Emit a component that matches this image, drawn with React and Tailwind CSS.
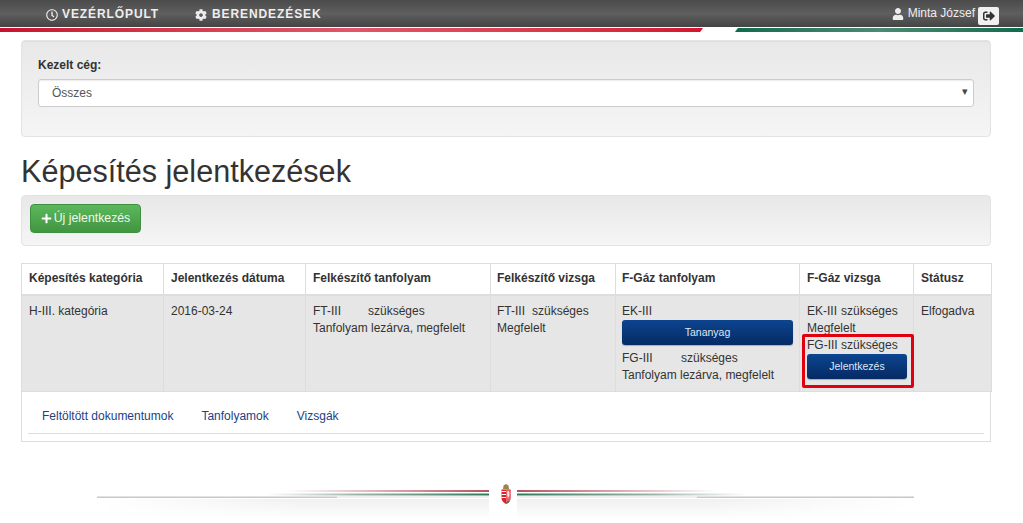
import { FaRegClock, FaCog, FaUser, FaSignOutAlt, FaPlus } from 'react-icons/fa'

const headers = [
  { label: 'Képesítés kategória', className: 'w-[142px] pl-[7px]' },
  { label: 'Jelentkezés dátuma', className: 'w-[142px] pl-[7px]' },
  { label: 'Felkészítő tanfolyam', className: 'w-[185px] pl-[7px]' },
  { label: 'Felkészítő vizsga', className: 'w-[125px] pl-[6px]' },
  { label: 'F-Gáz tanfolyam', className: 'w-[184px] pl-[6px]' },
  { label: 'F-Gáz vizsga', className: 'w-[114px] pl-[7px]' },
  { label: 'Státusz', className: 'w-[78px] pl-[7px]' },
]

function BlueButton({ children }) {
  return (
    <button className="block h-[25px] w-full rounded-[3px] bg-gradient-to-b from-[#0c4590] to-[#062a63] text-center text-[10.5px] text-[#dfe8f5] shadow-[0_1px_1px_rgba(0,0,0,0.25)]">
      {children}
    </button>
  )
}

// footer ornament: tricolour lines with a soft shadow and the coat of arms in the middle
function Ornament() {
  return (
    <svg width="817" height="43" viewBox="0 0 817 43" className="block">
      <defs>
        <linearGradient id="redL" x1="190" x2="392" y1="0" y2="0" gradientUnits="userSpaceOnUse">
          <stop offset="0" stopColor="#b5535d" stopOpacity="0" />
          <stop offset="1" stopColor="#b5535d" />
        </linearGradient>
        <linearGradient id="greenL" x1="170" x2="392" y1="0" y2="0" gradientUnits="userSpaceOnUse">
          <stop offset="0" stopColor="#9fb5ac" stopOpacity="0" />
          <stop offset="0.4" stopColor="#9fb5ac" />
          <stop offset="1" stopColor="#2f7a5c" />
        </linearGradient>
        <linearGradient id="redR" x1="420" x2="620" y1="0" y2="0" gradientUnits="userSpaceOnUse">
          <stop offset="0" stopColor="#b5535d" />
          <stop offset="1" stopColor="#b5535d" stopOpacity="0" />
        </linearGradient>
        <linearGradient id="greenR" x1="420" x2="650" y1="0" y2="0" gradientUnits="userSpaceOnUse">
          <stop offset="0" stopColor="#2f7a5c" />
          <stop offset="0.6" stopColor="#9fb5ac" />
          <stop offset="1" stopColor="#9fb5ac" stopOpacity="0" />
        </linearGradient>
        <linearGradient id="shadow" x1="0" x2="0" y1="0" y2="1">
          <stop offset="0" stopColor="#f0f0f0" />
          <stop offset="1" stopColor="#ffffff" />
        </linearGradient>
        <linearGradient id="edge" x1="0" x2="1" y1="0" y2="0">
          <stop offset="0" stopColor="#000" />
          <stop offset="0.25" stopColor="#fff" />
          <stop offset="0.75" stopColor="#fff" />
          <stop offset="1" stopColor="#000" />
        </linearGradient>
        <mask id="fade"><rect width="817" height="43" fill="url(#edge)" /></mask>
      </defs>
      <rect x="0" y="18" width="392" height="20" fill="url(#shadow)" mask="url(#fade)" />
      <rect x="420" y="18" width="397" height="20" fill="url(#shadow)" mask="url(#fade)" />
      <rect x="190" y="9" width="202" height="2" fill="url(#redL)" />
      <rect x="170" y="12.5" width="222" height="2" fill="url(#greenL)" />
      <rect x="0" y="15.5" width="240" height="1.5" fill="#c8c8c8" />
      <rect x="240" y="15.5" width="152" height="1" fill="#e2e2e2" />
      <rect x="420" y="9" width="200" height="2" fill="url(#redR)" />
      <rect x="420" y="12.5" width="230" height="2" fill="url(#greenR)" />
      <rect x="420" y="15.5" width="180" height="1" fill="#e2e2e2" />
      <rect x="600" y="15.5" width="217" height="1.5" fill="#c8c8c8" />
      <g transform="translate(404 3)">
        <path d="M2 5 L2.5 1.5 L5 0 L7.5 1.5 L8 5 Z" fill="#9a8646" />
        <path d="M0.5 5.5 H9.5 V14 C9.5 17 7 19 5 20 C3 19 0.5 17 0.5 14 Z" fill="#d8232f" />
        <path d="M5 5.5 H9.5 V14 C9.5 17 7 19 5 20 Z" fill="#e8636b" />
        <path d="M0.5 7.5 H5 M0.5 10.5 H5 M0.5 13.5 H5" stroke="#fff" strokeWidth="1.2" />
        <path d="M7.2 7 V13.5 M6 9 H8.5 M6 11 H8.5" stroke="#fff" strokeWidth="1" />
        <path d="M5.5 18 L9 16 L8 18.5 L5.5 20 Z" fill="#3f7a4e" />
      </g>
    </svg>
  )
}

export default function App() {
  return (
    <div className="min-h-[523px] overflow-hidden bg-white font-['Liberation_Sans',Arial,sans-serif] text-[12px] leading-[17px] text-[#333]">
      <nav>
        <div className="flex h-[27px] items-start justify-between bg-gradient-to-b from-[#4b4b4b] via-[#5f5f5f] to-[#444] text-white">
          <ul className="ml-[46px] flex gap-[36px] pt-[6px] text-[12px] font-bold leading-[17px] tracking-[0.9px] text-[#eee]">
            <li className="flex items-center gap-[4px]"><FaRegClock className="text-[12px]" />VEZÉRLŐPULT</li>
            <li className="flex items-center gap-[5px]"><FaCog className="text-[12px]" />BERENDEZÉSEK</li>
          </ul>
          <div className="mr-[24px] flex items-start gap-[3px] pt-[5px] text-[12px] text-[#eee]">
            <span className="flex h-[17px] items-center gap-[4px]"><FaUser className="text-[12px]" />Minta József</span>
            <span className="mt-[2px] flex h-[18px] w-[21px] items-center justify-center rounded-[2px] bg-[#f0f0f0] text-[#333]">
              <FaSignOutAlt className="text-[12px]" />
            </span>
          </div>
        </div>
        <div className="flex h-[5px] border-t border-white">
          <div className="w-[703px] bg-gradient-to-r from-[#c8102e] via-[#e0566a] to-[#d3152f] [clip-path:polygon(0_0,100%_0,99.6%_100%,0_100%)]" />
          <div className="w-[32px]" />
          <div className="flex-1 bg-gradient-to-r from-[#0d6b4d] via-[#4b8a74] to-[#0d6b4d] [clip-path:polygon(1%_0,100%_0,100%_100%,0_100%)]" />
        </div>
      </nav>

      <main className="mx-[21px] w-[970px]">
        <section className="mt-[8px] h-[97px] rounded-[4px] border border-[#e3e3e3] bg-gradient-to-b from-[#e8e8e8] to-[#f5f5f5] px-[16px] pt-[16px] shadow-[inset_0_1px_1px_rgba(0,0,0,0.05)]">
          <label className="block font-bold">Kezelt cég:</label>
          <div className="relative mt-[5px]">
            <select className="block h-[28px] w-full appearance-none rounded-[3px] border border-[#ccc] bg-white pl-[13px] text-[12px] text-[#555] shadow-[inset_0_1px_1px_rgba(0,0,0,0.075)]">
              <option>Összes</option>
            </select>
            <span className="absolute right-[6px] top-[4px] text-[11px] text-[#444]">▾</span>
          </div>
        </section>

        <h1 className="mt-[16px] text-[30.6px] font-normal leading-[36px] text-[#333]">Képesítés jelentkezések</h1>

        <section className="mt-[6px] h-[51px] rounded-[4px] border border-[#e3e3e3] bg-gradient-to-b from-[#e8e8e8] to-[#f5f5f5] pl-[8px] pt-[8px]">
          <button className="flex h-[29px] w-[111px] items-center justify-center gap-[2px] rounded-[4px] border border-[#3e8f3e] bg-gradient-to-b from-[#5cb85c] to-[#419641] text-[12.3px] text-[#eef7ee]">
            <FaPlus className="text-[11px] text-white" />Új jelentkezés
          </button>
        </section>

        <table className="mt-[17px] w-[970px] table-fixed border-collapse">
          <thead>
            <tr className="h-[31px]">
              {headers.map(({ label, className }) => (
                <th key={label} className={`${className} border border-[#ddd] border-b-2 pr-[6px] text-left font-bold`}>{label}</th>
              ))}
            </tr>
          </thead>
          <tbody>
            <tr className="h-[97px] bg-[#e6e6e6] align-top">
              <td className="border border-[#ddd] pl-[7px] pr-[6px] pt-[7px]">H-III. kategória</td>
              <td className="border border-[#ddd] pl-[7px] pr-[6px] pt-[7px]">2016-03-24</td>
              <td className="border border-[#ddd] pl-[7px] pr-[6px] pt-[7px]">
                <div className="flex"><span className="w-[55px]">FT-III</span>szükséges</div>
                <div>Tanfolyam lezárva, megfelelt</div>
              </td>
              <td className="border border-[#ddd] px-[6px] pt-[7px]">
                <div className="flex"><span className="w-[35px]">FT-III</span>szükséges</div>
                <div>Megfelelt</div>
              </td>
              <td className="border border-[#ddd] px-[6px] pt-[7px]">
                <div>EK-III</div>
                <BlueButton>Tananyag</BlueButton>
                <div className="mt-[5px] flex"><span className="w-[59px]">FG-III</span>szükséges</div>
                <div>Tanfolyam lezárva, megfelelt</div>
              </td>
              <td className="relative border border-[#ddd] pl-[7px] pr-[6px] pt-[7px]">
                <div className="flex"><span className="w-[34px]">EK-III</span>szükséges</div>
                <div>Megfelelt</div>
                <div>FG-III szükséges</div>
                <BlueButton>Jelentkezés</BlueButton>
                <span className="absolute left-[2px] top-[38px] h-[54px] w-[112px] rounded-[2px] border-[3px] border-[#e0000f]" />
              </td>
              <td className="border border-[#ddd] pl-[7px] pr-[6px] pt-[7px]">Elfogadva</td>
            </tr>
          </tbody>
        </table>

        <section className="h-[50px] border border-t-0 border-[#ddd] px-[6px]">
          <ul className="flex h-[42px] items-center gap-[28px] border-b border-[#ddd] pl-[14px] pt-[8px] text-[#1c3f85]">
            <li>Feltöltött dokumentumok</li>
            <li>Tanfolyamok</li>
            <li>Vizsgák</li>
          </ul>
        </section>
      </main>

      <footer className="ml-[97px] mt-[39px]">
        <Ornament />
      </footer>
    </div>
  )
}
